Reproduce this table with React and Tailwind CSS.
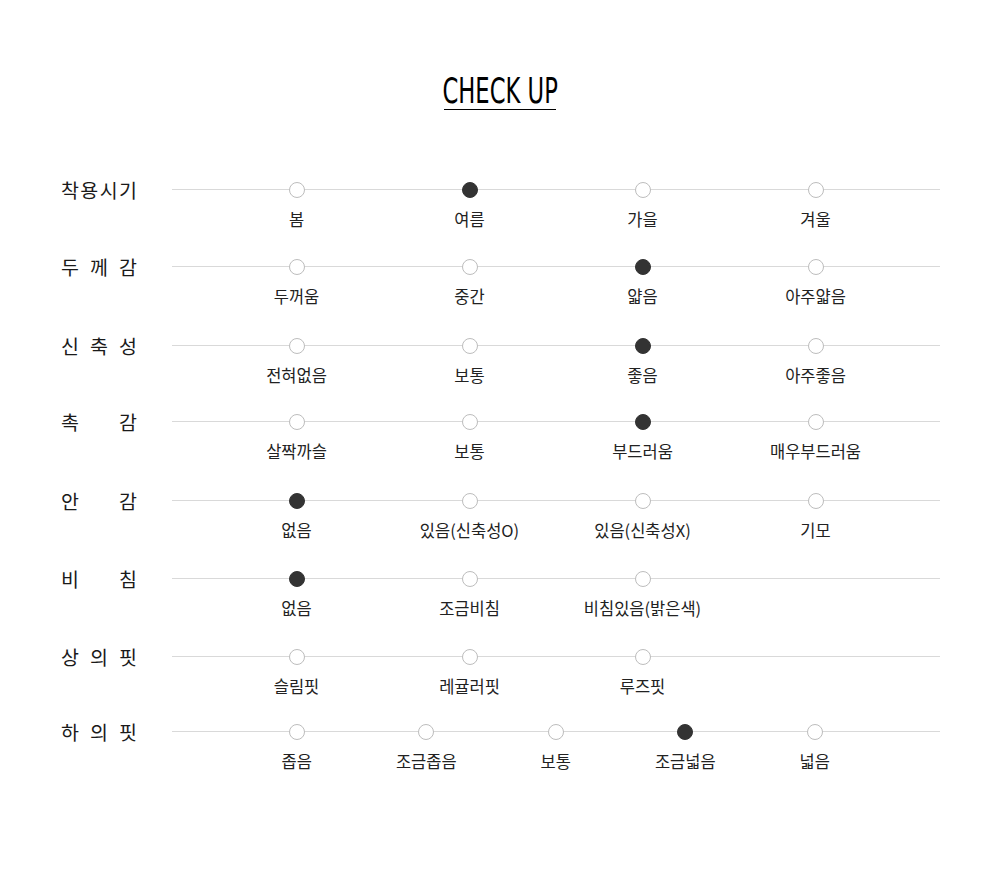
import React from "react";

const rows = [
  { label: "착용시기", h: "h-[77px]", cols: 4, opts: ["봄", "여름", "가을", "겨울"], on: 1 },
  { label: "두께감", h: "h-[79px]", cols: 4, opts: ["두꺼움", "중간", "얇음", "아주얇음"], on: 2 },
  { label: "신축성", h: "h-[76px]", cols: 4, opts: ["전혀없음", "보통", "좋음", "아주좋음"], on: 2 },
  { label: "촉감", h: "h-[79px]", cols: 4, opts: ["살짝까슬", "보통", "부드러움", "매우부드러움"], on: 2 },
  { label: "안감", h: "h-[78px]", cols: 4, opts: ["없음", "있음(신축성O)", "있음(신축성X)", "기모"], on: 0 },
  { label: "비침", h: "h-[78px]", cols: 4, opts: ["없음", "조금비침", "비침있음(밝은색)"], on: 0 },
  { label: "상의핏", h: "h-[75px]", cols: 4, opts: ["슬림핏", "레귤러핏", "루즈핏"], on: -1 },
  { label: "하의핏", h: "h-[80px]", cols: 5, opts: ["좁음", "조금좁음", "보통", "조금넓음", "넓음"], on: 3 },
];

const kr = { fontFamily: '"Noto Sans CJK KR", "Noto Sans", sans-serif' };

function Row({ row }) {
  const five = row.cols === 5;
  return (
    <div className={`flex items-start ${row.h}`}>
      <div className="w-[76px] h-4 flex items-center justify-between text-[19.5px] text-[#1a1a1a] leading-none">
        {row.label.split("").map((c, i) => (
          <span key={i}>{c}</span>
        ))}
      </div>
      <div className="relative ml-[35px] w-[768px]">
        <div className="absolute left-0 right-0 top-[7.5px] h-px bg-[#d9d9d9]" />
        <div className={`relative flex ${five ? "pl-[60px]" : "pl-[38px]"}`}>
          {row.opts.map((o, i) => (
            <div
              key={i}
              className={`${five ? "w-[129.5px]" : "w-[173px]"} flex flex-col items-center`}
            >
              <div
                className={`w-4 h-4 rounded-full border ${
                  i === row.on ? "bg-[#333] border-[#333]" : "bg-white border-[#bdbdbd]"
                }`}
              />
              <div className="mt-[11px] text-[16.5px] leading-5 text-[#222] whitespace-nowrap">{o}</div>
            </div>
          ))}
        </div>
      </div>
    </div>
  );
}

export default function App() {
  return (
    <div className="w-[1000px] h-[877px] bg-white" style={kr}>
      <div className="pt-[73px] flex justify-center">
        <div
          className="w-[112px] flex justify-center border-b-[1.5px] border-black text-[35px] leading-[36px] text-black"
          style={{ fontFamily: '"Liberation Sans Narrow", "DejaVu Sans Condensed", sans-serif' }}
        >
          <span className="inline-block shrink-0 scale-x-[0.72] whitespace-nowrap">CHECK UP</span>
        </div>
      </div>
      <div className="pl-[61px] pt-[71.5px]">
        {rows.map((r, i) => (
          <Row key={i} row={r} />
        ))}
      </div>
    </div>
  );
}
